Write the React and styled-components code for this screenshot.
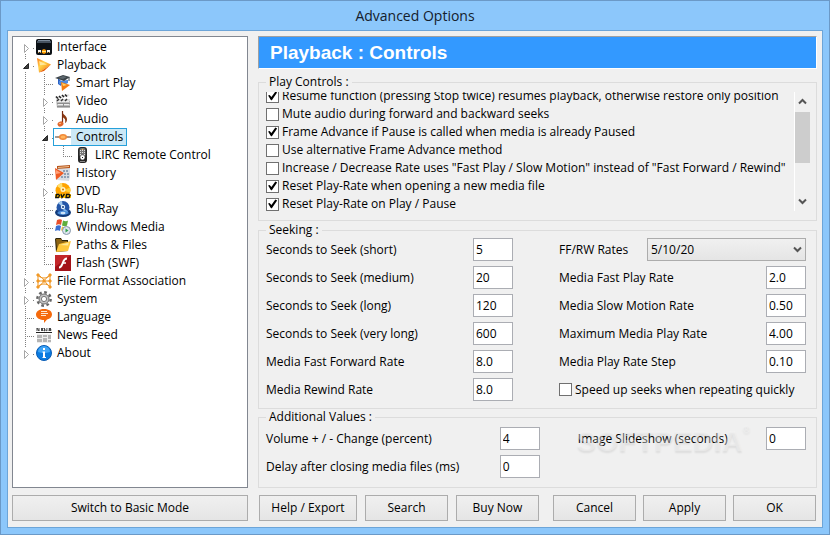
import React, { useLayoutEffect, useRef } from "react";
import styled, { createGlobalStyle, css } from "styled-components";

const GlobalStyle = createGlobalStyle`
  * { box-sizing: border-box; }
  body { margin: 0; background: #8cc7fb; }
  body, button, input, select {
    font-family: "Open Sans", "Noto Sans", sans-serif;
    font-size: 12px;
    line-height: 16px;
    color: #000;
  }
`;

/* ---------- window frame ---------- */

const Window = styled.main`
  display: flex;
  flex-direction: column;
  min-height: 100vh;
  padding: 0 6px 6px;
  border: 1px solid #6b99c7;
  background: #8cc7fb;
`;

const TitleBar = styled.h1`
  margin: 0;
  height: 29px;
  font-size: 14px;
  font-weight: 400;
  line-height: 29px;
  text-align: center;
  color: #14202c;
`;

const Client = styled.form`
  flex: 1;
  display: grid;
  grid-template-columns: 236px minmax(0, 1fr);
  grid-template-rows: 1fr auto;
  gap: 7px 10px;
  padding: 5px 5px 6px 4px;
  border: 1px solid #6da5d8;
  background: #f0f0f0;
`;

/* ---------- tree ---------- */

const Tree = styled.ul`
  list-style: none;
  margin: 0;
  padding: 1px 3px;
  border: 1px solid #828790;
  background: #fff;
`;

const TreeRow = styled.li`
  display: flex;
  height: 18px;
`;

const dotsY = "repeating-linear-gradient(180deg, #808080 0 1px, transparent 1px 2px)";
const dotsX = "repeating-linear-gradient(90deg, #808080 0 1px, transparent 1px 2px)";

const guides = {
  blank: css``,
  line: css`background: ${dotsY} 9px 0 / 1px 18px no-repeat;`,
  tee: css`background: ${dotsY} 9px 0 / 1px 18px no-repeat, ${dotsX} 9px 10px / 10px 1px no-repeat;`,
  end: css`background: ${dotsY} 9px 0 / 1px 11px no-repeat, ${dotsX} 9px 10px / 10px 1px no-repeat;`,
  first: css`background: ${dotsY} 9px 16px / 1px 2px no-repeat, ${dotsX} 17px 10px / 2px 1px no-repeat;`,
  node: css`background: ${dotsY} 9px 0 / 1px 3px no-repeat, ${dotsY} 9px 16px / 1px 2px no-repeat, ${dotsX} 17px 10px / 2px 1px no-repeat;`,
  last: css`background: ${dotsY} 9px 0 / 1px 3px no-repeat, ${dotsX} 17px 10px / 2px 1px no-repeat;`,
};

const Guide = styled.span`
  flex: none;
  width: 19px;
  height: 18px;
  ${(p) => guides[p.$kind]}
`;

const Node = styled.span`
  display: flex;
  align-items: center;
  height: 18px;
  margin-left: -1px;
  padding-left: 1px;
  border: 1px solid ${(p) => (p.$selected ? "#26a0da" : "transparent")};
`;

const NodeText = styled.span`
  padding: 0 3px 0 5px;
  white-space: nowrap;
  background: ${(p) => (p.$selected ? "#cbe8f6" : "transparent")};
`;

const Icon = styled.svg`
  display: block;
  flex: none;
  width: 16px;
  height: 16px;
`;

const Expander = ({ open }) => (
  <svg width="19" height="18" viewBox="0 0 19 18" aria-hidden="true">
    {open ? (
      <path d="M12.500 7.500v5h-5z" fill="#404040" stroke="#262626" />
    ) : (
      <path d="M8.500 6.500v8l4-4z" fill="#fff" stroke="#a6a6a6" />
    )}
  </svg>
);

const icons = {
  interface: (
    <>
      <rect width="16" height="16" rx="2" fill="#0c1116" />
      <path d="M1 2h14v2H1z" fill="#46525f" />
      <path d="M2 1h12v1H2z" fill="#7e8d9d" />
      <path d="M2 11h12v3H2z" fill="#c9a15c" />
      <path d="M2 11h3v2H2zM11 11h3v2h-3z" fill="#f4f4f4" />
      <path d="M6 11l2-1 2 1v3l-2 1-2-1z" fill="#ff9a00" />
      <path d="M6 12h4v1H6z" fill="#ffe277" />
      <path d="M5 11h1v4H5zM10 11h1v4h-1zM3 13h1v1H3zM12 13h1v1h-1z" fill="#222" />
    </>
  ),
  play: (
    <>
      <defs>
        <linearGradient id="play" x1="0" y1="0" x2="1" y2="1">
          <stop offset="0" stopColor="#ff7a1c" />
          <stop offset=".4" stopColor="#ffd24a" />
          <stop offset="1" stopColor="#f26a00" />
        </linearGradient>
      </defs>
      <path d="M1 1l14 6.500L3 15.500z" fill="url(#play)" />
      <path d="M3 4l8 3.500-7 .8z" fill="#ffe79a" />
      <path d="M3 15.500L15 7.500 8 14z" fill="#e85a00" />
    </>
  ),
  smart: (
    <>
      <path d="M3 3v6l3 2 1-4z" fill="#2d62c4" />
      <path d="M4 6l9-1v3l-4 2-5-1z" fill="#4d8ae0" />
      <path d="M0 3l8-3 7 2-6 4z" fill="#3a4247" />
      <path d="M3 3l5-2 4 1-4 2z" fill="#5e686e" />
      <path d="M14 2v4" stroke="#3a4247" />
      <path d="M6 7l9 3-8 6z" fill="#f57c10" />
      <path d="M7 8l5 2-4 1z" fill="#ffd468" />
    </>
  ),
  video: (
    <>
      <path d="M1 7h14v8H2z" fill="#bcbcbc" />
      <path d="M2 8h12v1H2zM3 11h11v1H3z" fill="#eee" />
      <path d="M2 10h13v1H2zM2 13h13v1H2zM8 11h1v2H8z" fill="#8e8e8e" />
      <path d="M0 4l14-3 .5 2L1 6z" fill="#e8e8e8" />
      <path d="M1 3.500l2 2M4 3l2 2M7 2l2 2M10 1.500l2 2" stroke="#222" strokeWidth="1.500" />
      <path d="M1 6h14v2H1z" fill="#ddd" />
      <path d="M2 8l2-2M6 8l2-2M10 8l2-2" stroke="#333" strokeWidth="1.500" />
    </>
  ),
  audio: (
    <>
      <path d="M7 0c.5 4 5.500 4.500 5 9-.2 2-1.500 3-2 3 1-3.500-.5-5-3-6z" fill="#8c3a12" />
      <path d="M7.500 0v13" stroke="#7a2c10" strokeWidth="1.200" />
      <ellipse cx="5.500" cy="13" rx="3" ry="2.500" fill="#e0652a" transform="rotate(-20 5.500 13)" />
      <ellipse cx="5" cy="12.500" rx="1.200" ry=".8" fill="#ffb27a" />
    </>
  ),
  controls: (
    <>
      <path d="M0 8h16" stroke="#3c3c3c" />
      <path d="M2 8h12" stroke="#e07a38" opacity=".6" />
      <ellipse cx="8" cy="8" rx="4" ry="3" fill="#f28a3a" />
      <ellipse cx="8" cy="8" rx="2.500" ry="1.500" fill="#ffb45c" />
    </>
  ),
  remote: (
    <>
      <rect x="4" y="0" width="9" height="16" rx="3" fill="#262626" />
      <rect x="5.500" y="1" width="6" height="9" rx="2" fill="#777" />
      <path d="M6 3h1v1H6zM8 3h1v1H8zM10 3h1v1h-1zM6 5h1v1H6zM8 5h1v1H8zM10 5h1v1h-1zM6 7h1v1H6zM10 7h1v1h-1z" fill="#ddd" />
      <path d="M8 2h1v1H8z" fill="#f4b23a" />
      <circle cx="8.500" cy="10.500" r="2.200" fill="#fff" />
      <path d="M8 10h1v1H8z" fill="#222" />
      <path d="M6 14h5v1H6z" fill="#888" />
    </>
  ),
  history: (
    <>
      <path d="M2 1l13-1v4L2 5z" fill="#b3541d" />
      <path d="M3 2l11-1v1L3 3z" fill="#f5c390" />
      <path d="M1 4l14-1v9l-1 4-12-1z" fill="#d9dde2" />
      <path d="M8 5h2v2H8zM11 5h2v2h-2zM9 8h2v2H9zM12 8h2v2h-2zM6 11h2v2H6zM9 11h2v2H9zM12 11h2v2h-2z" fill="#8ea0b4" />
      <path d="M0 3l9 5-8 7z" fill="#ef5a22" />
      <path d="M1 5l5 3-5 1z" fill="#ffa078" />
    </>
  ),
  dvd: (
    <>
      <circle cx="8" cy="7.500" r="7.500" fill="#ffa400" />
      <path d="M8 7.500L2 3a7.500 7.500 0 0 1 5-3z" fill="#ffe070" />
      <path d="M8 7.500l7-3a7.500 7.500 0 0 1 0 5z" fill="#ffd03c" />
      <circle cx="8" cy="6.500" r="2.500" fill="#fff3c4" />
      <circle cx="8" cy="6.500" r="1" fill="#d07800" />
      <path d="M0 11h16v4H0z" fill="#ffc000" />
      <path d="M1.500 11.500h2l1 1-1 2H.8zM6 11l1 3.500L9.500 11M11.500 11.500h2.500l1 1-1 2h-3z" fill="none" stroke="#111" strokeWidth="1.300" />
    </>
  ),
  bluray: (
    <>
      <ellipse cx="8" cy="11.500" rx="8" ry="4.500" fill="#123a7a" />
      <circle cx="8" cy="6.500" r="6.500" fill="#2456a8" />
      <path d="M8 6.500L3 2a6.500 6.500 0 0 1 4-2z" fill="#9fc8ee" />
      <path d="M8 6.500l5 4a6.500 6.500 0 0 1-4 2z" fill="#7db4e8" />
      <circle cx="8" cy="6" r="2.200" fill="#e6f2fc" />
      <circle cx="8" cy="6" r="1" fill="#123a7a" />
      <path d="M2 12c3-3 9-3 12 0-3 2.500-9 2.500-12 0z" fill="#4a8cd8" />
      <ellipse cx="8" cy="12" rx="2.500" ry="1.300" fill="#cfe4f8" />
    </>
  ),
  windows: (
    <>
      <path d="M2 1c2-1 4-1 5 0L6 6C5 5 3 5 1 6z" fill="#e8502a" />
      <path d="M8 1.500c2 1 4 1 5 0l-1 5c-1 1-3 1-5 0z" fill="#5fae3c" />
      <path d="M1 7c2-1 4-1 5 0l-1 5c-1-1-3-1-5 0z" fill="#3a6fd0" />
      <path d="M7 7.500c2 1 4 1 5 0l-1 4H6z" fill="#f5bc2c" />
      <circle cx="11.500" cy="11.500" r="4" fill="#dfe6ee" stroke="#8696aa" />
      <path d="M10.500 9.500l3 2-3 2z" fill="#2ea04a" />
    </>
  ),
  folder: (
    <>
      <path d="M0 2l1-1h5l1 2h6v11L1 15z" fill="#2e2408" />
      <path d="M1 2h5l1 2h5v4L2 13z" fill="#8c6414" />
      <path d="M4 7l12-3-3 10-12 1z" fill="#ffc83c" />
      <path d="M5 8l9-2.500-1 3z" fill="#ffe998" />
    </>
  ),
  flash: (
    <>
      <rect width="16" height="16" fill="#a31218" />
      <path d="M0 0h16L0 12z" fill="#c2262a" />
      <path d="M12 3.500C9 3.500 8.500 6 7.500 8.500S6 12.500 4 12.500" fill="none" stroke="#fff" strokeWidth="2" />
      <path d="M8 8h3" stroke="#fff" strokeWidth="1.500" />
    </>
  ),
  association: (
    <g fill="none" stroke="#ee9420">
      <path d="M2 2c2 4 10 4 12 0M2 14c2-4 10-4 12 0M2 2c4 1 8 9 12 12M2 14c4-2 8-10 12-12M1 8h14M2 2v12M14 2v12" />
      <path d="M1 1h2v2H1zM13 1h2v2h-2zM1 7h2v2H1zM13 7h2v2h-2zM1 13h2v2H1zM13 13h2v2h-2zM7 7h2v2H7z" fill="#ffa630" />
    </g>
  ),
  gear: (
    <>
      <circle cx="8" cy="8" r="6.700" fill="none" stroke="#666" strokeWidth="2.400" strokeDasharray="2.700 2.560" />
      <circle cx="8" cy="8" r="5" fill="#c4c4c4" stroke="#6c6c6c" />
      <circle cx="8" cy="8" r="2.600" fill="#fff" stroke="#777" />
    </>
  ),
  language: (
    <>
      <path d="M8 0c5 0 8 2.300 8 5.500 0 2.500-2 4.500-5 5L8 14v-3C3 11 0 8.500 0 5.500S3 0 8 0z" fill="#f56a0c" />
      <path d="M5 2.500h6M5 4.500h7M5 6.500h5" stroke="#ffe6d0" />
    </>
  ),
  news: (
    <>
      <path d="M1 4V1l2 3V1M5 1.500h2.500M5 2.500h2M5 3.500h2.500M8.500 1v3l1.200-1 1.200 1V1M15 1.500h-2v1h2v1h-2.500" stroke="#333" strokeWidth=".9" fill="none" />
      <path d="M0 5h16v1H0z" fill="#222" />
      <path d="M1 7h14v9H1z" fill="#ececec" />
      <path d="M1 8h5v3H1zM1 12h5v3H1zM7 8h4v2H7zM7 11h4v4H7zM12 8h3v4h-3zM12 13h3v2h-3z" fill="#b4b4b4" />
    </>
  ),
  about: (
    <>
      <circle cx="8" cy="8" r="7.500" fill="#0a7be0" stroke="#0a5cb4" />
      <path d="M2 7a6 6 0 0 1 12 0c-4 1.500-8 1.500-12 0z" fill="#3fa4f6" />
      <path d="M7 3h2v2H7zM6.500 6.500H9V12h1v1H6.500v-1H7V7.500h-.5z" fill="#fff" />
    </>
  ),
};

const treeData = [
  { label: "Interface", icon: "interface", guides: ["first"], expander: "closed" },
  { label: "Playback", icon: "play", guides: ["node"], expander: "open" },
  { label: "Smart Play", icon: "smart", guides: ["line", "tee"] },
  { label: "Video", icon: "video", guides: ["line", "node"], expander: "closed" },
  { label: "Audio", icon: "audio", guides: ["line", "node"], expander: "closed" },
  { label: "Controls", icon: "controls", guides: ["line", "node"], expander: "open", selected: true },
  { label: "LIRC Remote Control", icon: "remote", guides: ["line", "line", "end"] },
  { label: "History", icon: "history", guides: ["line", "tee"] },
  { label: "DVD", icon: "dvd", guides: ["line", "node"], expander: "closed" },
  { label: "Blu-Ray", icon: "bluray", guides: ["line", "tee"] },
  { label: "Windows Media", icon: "windows", guides: ["line", "tee"] },
  { label: "Paths & Files", icon: "folder", guides: ["line", "tee"] },
  { label: "Flash (SWF)", icon: "flash", guides: ["line", "end"] },
  { label: "File Format Association", icon: "association", guides: ["node"], expander: "closed" },
  { label: "System", icon: "gear", guides: ["node"], expander: "closed" },
  { label: "Language", icon: "language", guides: ["tee"] },
  { label: "News Feed", icon: "news", guides: ["tee"] },
  { label: "About", icon: "about", guides: ["last"], expander: "closed" },
];

const OptionsTree = () => (
  <Tree role="tree" aria-label="Option pages">
    {treeData.map((n) => (
      <TreeRow key={n.label} role="treeitem" aria-selected={!!n.selected} aria-level={n.guides.length}>
        {n.guides.map((kind, i) => (
          <Guide key={i} $kind={kind}>
            {n.expander && i === n.guides.length - 1 && <Expander open={n.expander === "open"} />}
          </Guide>
        ))}
        <Node $selected={n.selected}>
          <Icon viewBox="0 0 16 16" aria-hidden="true">{icons[n.icon]}</Icon>
          <NodeText $selected={n.selected}>{n.label}</NodeText>
        </Node>
      </TreeRow>
    ))}
  </Tree>
);

/* ---------- right pane ---------- */

const Pane = styled.div`
  display: flex;
  flex-direction: column;
  min-width: 0;
`;

const PageHeader = styled.h2`
  margin: 0 0 5px;
  height: 33px;
  padding-left: 11px;
  border: 1px solid;
  border-color: #a0a0a0 #fff #fff #a0a0a0;
  background: #3399ff;
  color: #fff;
  font: bold 19px/31px "Liberation Sans", Arial, sans-serif;
`;

const Group = styled.fieldset`
  position: relative;
  min-width: 0;
  margin: 0 0 ${(p) => p.$gap || 0}px;
  padding: ${(p) => p.$pad};
  border: 1px solid #dcdcdc;
`;

const Legend = styled.legend`
  padding: 0 3px;
  height: 16px;
  white-space: nowrap;
`;

const ScrollFrame = styled.div`
  display: flex;
  height: 119px;
`;

const CheckList = styled.div`
  flex: 1;
  min-width: 0;
  overflow: hidden;
`;

const CheckLabel = styled.label`
  display: flex;
  align-items: center;
  gap: 3px;
  height: ${(p) => p.$height || 18}px;
  white-space: nowrap;
`;

const CheckBox = styled.input.attrs({ type: "checkbox" })`
  appearance: none;
  flex: none;
  display: block;
  width: 13px;
  height: 13px;
  margin: 0;
  border: 1px solid #707070;
  background: #fff;

  &:checked::before {
    content: "";
    display: block;
    width: 11px;
    height: 11px;
    background: #000;
    clip-path: polygon(10% 46%, 24% 40%, 40% 60%, 76% 10%, 92% 18%, 44% 88%, 36% 88%);
  }
`;

const ScrollBar = styled.div`
  flex: none;
  display: flex;
  flex-direction: column;
  width: 16px;
  border-left: 1px solid #fff;
`;

const ScrollArrow = styled.button.attrs({ type: "button" })`
  display: flex;
  align-items: center;
  justify-content: center;
  width: 15px;
  height: 19px;
  padding: 0;
  border: 0;
  background: none;
`;

const ScrollTrack = styled.div`
  flex: 1;
  padding-top: 1px;
`;

const ScrollThumb = styled.div`
  height: 51px;
  background: #cdcdcd;
`;

const Chevron = ({ up }) => (
  <svg width="9" height="7" viewBox="0 0 9 7" aria-hidden="true">
    <path d={up ? "M1 5.500L4.500 2 8 5.500" : "M1 1.500L4.500 5 8 1.500"} fill="none" stroke="#555" strokeWidth="2" />
  </svg>
);

const Columns = styled.div`
  display: grid;
  grid-template-columns: ${(p) => p.$columns};
  column-gap: ${(p) => p.$gap}px;
`;

const Stack = styled.div`
  display: flex;
  flex-direction: column;
  gap: 5px;
`;

const Field = styled.div`
  display: flex;
  align-items: center;
  justify-content: space-between;
  height: 23px;
`;

const FieldLabel = styled.label`
  padding-top: 1px;
  white-space: nowrap;
`;

const TextBox = styled.input.attrs({ type: "text" })`
  width: 40px;
  height: 23px;
  padding: 0 2px;
  border: 1px solid #abadb3;
  border-radius: 0;
  background: #fff;
`;

const SelectWrap = styled.span`
  display: grid;
  align-items: center;
  width: 159px;

  > * { grid-area: 1 / 1; }
  > svg { justify-self: end; margin-right: 4px; pointer-events: none; }
`;

const Select = styled.select`
  appearance: none;
  width: 100%;
  height: 23px;
  padding: 0 3px;
  border: 1px solid #acacac;
  border-radius: 0;
  background: linear-gradient(#f0f0f0, #e5e5e5);
`;

const Watermark = styled.span`
  position: absolute;
  top: 0;
  right: 66px;
  font: bold 29px/32px "Liberation Sans", Arial, sans-serif;
  color: rgba(246, 246, 246, 0.4);
  text-shadow: 0 2px 2px rgba(0, 0, 0, 0.08);
  pointer-events: none;

  sup { font-size: 10px; line-height: 10px; vertical-align: top; }
`;

const ButtonGroup = styled.div`
  display: flex;
  gap: ${(p) => p.$gap}px;
`;

const Actions = styled.div`
  display: flex;
  justify-content: space-between;
  padding: 0 1px;
`;

const Button = styled.button.attrs({ type: "button" })`
  width: ${(p) => p.$width || "83px"};
  height: 26px;
  padding: 0;
  border: 1px solid #acacac;
  border-radius: 0;
  background: linear-gradient(#f0f0f0, #e5e5e5);
  white-space: nowrap;
`;

const playControls = [
  ["Resume function (pressing Stop twice) resumes playback, otherwise restore only position", true],
  ["Mute audio during forward and backward seeks", false],
  ["Frame Advance if Pause is called when media is already Paused", true],
  ["Use alternative Frame Advance method", false],
  ['Increase / Decrease Rate uses "Fast Play / Slow Motion" instead of "Fast Forward / Rewind"', false],
  ["Reset Play-Rate when opening a new media file", true],
  ["Reset Play-Rate on Play / Pause", true],
];

const NumberField = ({ id, label, value }) => (
  <Field>
    <FieldLabel htmlFor={id}>{label}</FieldLabel>
    <TextBox id={id} defaultValue={value} />
  </Field>
);

const PlayControls = () => {
  const list = useRef(null);
  useLayoutEffect(() => {
    list.current.scrollTop = 5;
  }, []);
  return (
    <Group $pad="2px 6px 9px 7px" $gap={1}>
      <Legend>Play Controls :</Legend>
      <ScrollFrame>
        <CheckList ref={list}>
          {playControls.map(([text, on]) => (
            <CheckLabel key={text}>
              <CheckBox defaultChecked={on} />
              {text}
            </CheckLabel>
          ))}
        </CheckList>
        <ScrollBar>
          <ScrollArrow aria-label="Scroll up"><Chevron up /></ScrollArrow>
          <ScrollTrack><ScrollThumb /></ScrollTrack>
          <ScrollArrow aria-label="Scroll down"><Chevron /></ScrollArrow>
        </ScrollBar>
      </ScrollFrame>
    </Group>
  );
};

export default function App() {
  return (
    <>
      <GlobalStyle />
      <Window>
        <TitleBar>Advanced Options</TitleBar>
        <Client>
          <OptionsTree />
          <Pane>
            <PageHeader>Playback : Controls</PageHeader>
            <PlayControls />
            <Group $pad="0 10px 7px 7px">
              <Legend>Seeking :</Legend>
              <Columns $columns="1fr 1fr" $gap={46}>
                <Stack>
                  <NumberField id="seek-short" label="Seconds to Seek (short)" value="5" />
                  <NumberField id="seek-medium" label="Seconds to Seek (medium)" value="20" />
                  <NumberField id="seek-long" label="Seconds to Seek (long)" value="120" />
                  <NumberField id="seek-very-long" label="Seconds to Seek (very long)" value="600" />
                  <NumberField id="fast-forward" label="Media Fast Forward Rate" value="8.0" />
                  <NumberField id="rewind" label="Media Rewind Rate" value="8.0" />
                </Stack>
                <Stack>
                  <Field>
                    <FieldLabel htmlFor="rates">FF/RW Rates</FieldLabel>
                    <SelectWrap>
                      <Select id="rates" defaultValue="5/10/20">
                        <option>5/10/20</option>
                      </Select>
                      <Chevron />
                    </SelectWrap>
                  </Field>
                  <NumberField id="fast-play" label="Media Fast Play Rate" value="2.0" />
                  <NumberField id="slow-motion" label="Media Slow Motion Rate" value="0.50" />
                  <NumberField id="max-rate" label="Maximum Media Play Rate" value="4.00" />
                  <NumberField id="rate-step" label="Media Play Rate Step" value="0.10" />
                  <CheckLabel $height={23}>
                    <CheckBox />
                    Speed up seeks when repeating quickly
                  </CheckLabel>
                </Stack>
              </Columns>
            </Group>
            <Group $pad="2px 10px 9px 7px">
              <Legend>Additional Values :</Legend>
              <Columns $columns="6fr 5fr" $gap={38}>
                <Stack>
                  <NumberField id="volume" label="Volume + / - Change (percent)" value="4" />
                  <NumberField id="delay" label="Delay after closing media files (ms)" value="0" />
                </Stack>
                <Stack>
                  <NumberField id="slideshow" label="Image Slideshow (seconds)" value="0" />
                </Stack>
              </Columns>
              <Watermark aria-hidden="true">SOFTPEDIA<sup>®</sup></Watermark>
            </Group>
          </Pane>
          <Button $width="100%">Switch to Basic Mode</Button>
          <Actions>
            <ButtonGroup $gap={8}>
              <Button $width="98px">Help / Export</Button>
              <Button>Search</Button>
              <Button>Buy Now</Button>
            </ButtonGroup>
            <ButtonGroup $gap={7}>
              <Button>Cancel</Button>
              <Button>Apply</Button>
              <Button>OK</Button>
            </ButtonGroup>
          </Actions>
        </Client>
      </Window>
    </>
  );
}
